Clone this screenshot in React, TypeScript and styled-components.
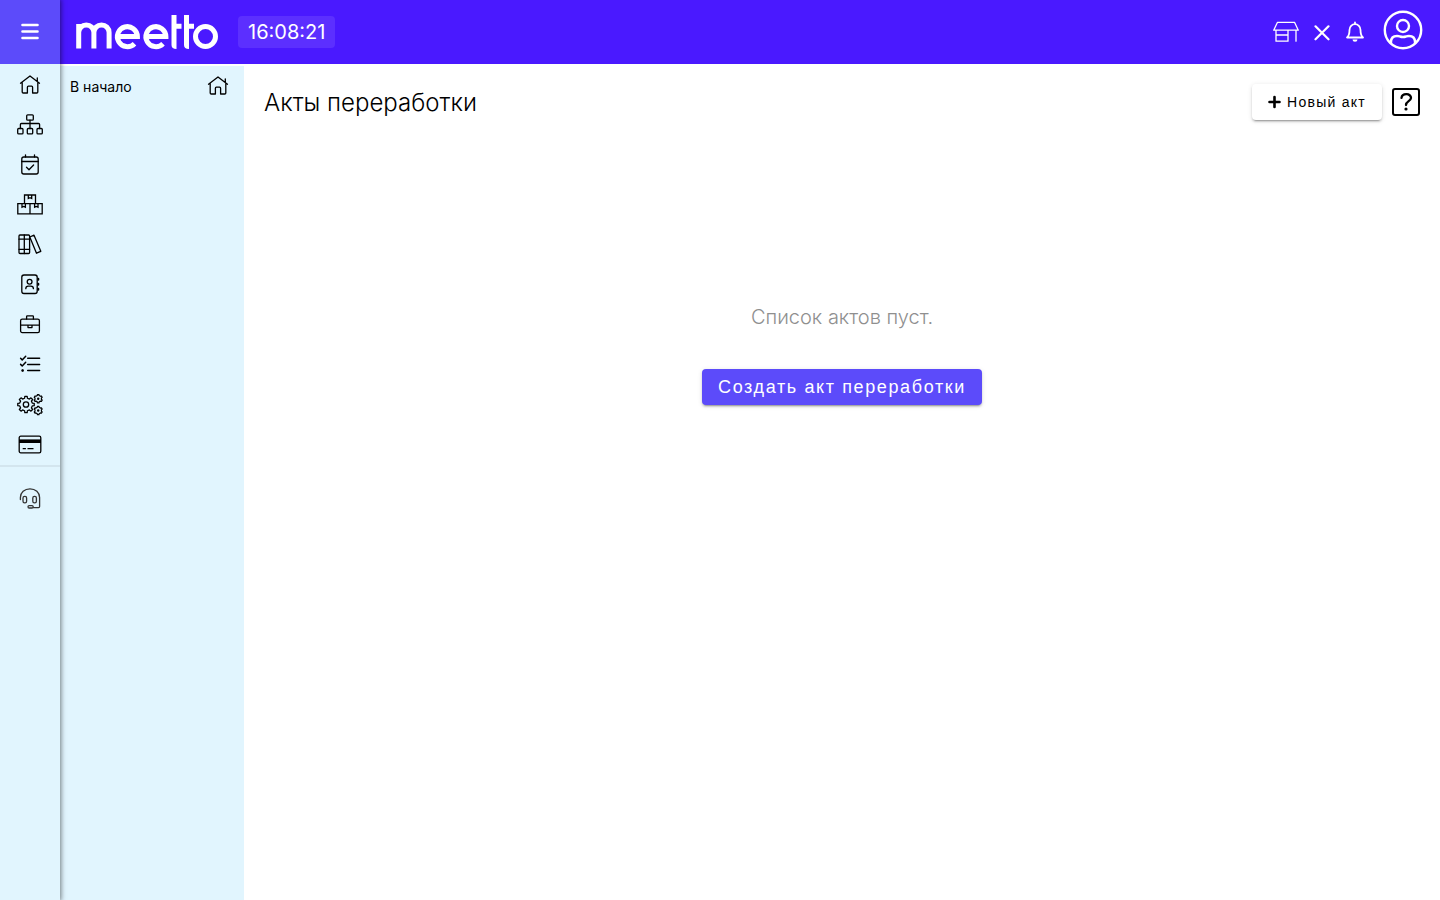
import React, { useState } from "react";
import styled, { createGlobalStyle } from "styled-components";

const GlobalStyle = createGlobalStyle`
  *, *::before, *::after { box-sizing: border-box; }
  body {
    margin: 0;
    background: #fff;
    color: #000;
    font-family: Inter, "Liberation Sans", sans-serif;
  }
  button { cursor: pointer; }
`;

const Page = styled.div`
  display: flex;
  min-height: 100vh;
`;

const Rail = styled.aside`
  position: relative;
  z-index: 2;
  flex: none;
  width: 60px;
  background: #e1f5fe;
  box-shadow: 0 0 5px 1px rgba(0, 0, 0, 0.5);
`;

const MenuButton = styled.button`
  display: flex;
  align-items: center;
  justify-content: center;
  width: 100%;
  height: 64px;
  padding: 0;
  border: 0;
  background: #5c4bfa;
  color: #fff;
`;

const RailNav = styled.nav<{ $separated?: boolean }>`
  display: flex;
  flex-direction: column;
  padding: ${(p) => (p.$separated ? "11px 0" : "0 0 1px")};
  border-top: ${(p) => (p.$separated ? "2px solid #d3e5ee" : "0")};
  color: ${(p) => (p.$separated ? "#333" : "#000")};
`;

const RailLink = styled.a`
  display: flex;
  align-items: center;
  justify-content: center;
  height: 40px;
  color: inherit;
`;

const Shell = styled.div`
  display: flex;
  flex: 1;
  flex-direction: column;
  min-width: 0;
`;

const TopBar = styled.header`
  display: flex;
  align-items: center;
  height: 64px;
  padding: 0 9px 0 16px;
  background: #4a19ff;
  color: #fff;
`;

const LogoLink = styled.a`
  display: flex;
  color: inherit;
`;

const Clock = styled.time`
  margin-left: 20px;
  padding: 0 10px;
  border-radius: 4px;
  background: #5c2fff;
  font-size: 20px;
  line-height: 32px;
`;

const Tools = styled.div`
  display: flex;
  align-items: center;
  gap: 4px;
  margin-left: auto;
`;

const ToolButton = styled.button<{ $size: number }>`
  display: flex;
  align-items: center;
  justify-content: center;
  width: ${(p) => p.$size}px;
  height: 40px;
  padding: 0;
  border: 0;
  background: none;
  color: inherit;
`;

const Body = styled.div`
  display: flex;
  flex: 1;
  padding-top: 2px;
`;

const SidePanel = styled.nav`
  flex: none;
  width: 184px;
  background: #e1f5fe;
`;

const PanelLink = styled.a`
  display: flex;
  align-items: flex-start;
  justify-content: space-between;
  padding: 0 12px 0 10px;
  color: #000;
  font-size: 14px;
  line-height: 42px;
  text-decoration: none;

  svg { margin-top: 5px; }
`;

const Main = styled.main`
  flex: 1;
  min-width: 0;
  padding: 18px 20px;
`;

const Heading = styled.div`
  display: flex;
  align-items: center;
  gap: 10px;
`;

const Title = styled.h1`
  flex: 1;
  margin: 0;
  padding-top: 2px;
  font-size: 24px;
  font-weight: 300;
  line-height: 34px;
`;

const Button = styled.button<{ $primary?: boolean }>`
  display: inline-flex;
  align-items: center;
  gap: 6px;
  height: 36px;
  padding: 0 16px;
  border: 0;
  border-radius: 4px;
  background: ${(p) => (p.$primary ? "#5c4bfa" : "#fff")};
  color: ${(p) => (p.$primary ? "#fff" : "#000")};
  font-family: "Liberation Sans", Arial, sans-serif;
  font-size: ${(p) => (p.$primary ? 18 : 14)}px;
  letter-spacing: 0.09em;
  box-shadow: 0 3px 1px -2px rgba(0, 0, 0, 0.2), 0 2px 2px 0 rgba(0, 0, 0, 0.14),
    0 1px 5px 0 rgba(0, 0, 0, 0.12);
`;

const HelpButton = styled.button`
  display: flex;
  padding: 0;
  border: 0;
  background: none;
  color: #000;
`;

const Empty = styled.section`
  display: flex;
  flex-direction: column;
  align-items: center;
  gap: 35px;
  padding-top: 180px;
`;

const EmptyText = styled.p`
  margin: 0;
  color: #8f8f8f;
  font-size: 20px;
  font-weight: 300;
  line-height: 34px;
`;

const Line = styled.svg`
  display: block;
  fill: none;
  stroke: currentColor;
  stroke-width: 1.3;
  stroke-linecap: round;
  stroke-linejoin: round;
`;

const RailIcon = ({ children }: { children: React.ReactNode }) => (
  <Line width="28" height="28" viewBox="0 0 28 28" aria-hidden="true">
    {children}
  </Line>
);

const HomeIcon = () => (
  <RailIcon>
    <path d="M4.5 13.2 14 5.900l9.500 7.300M6.200 12.200V21.900q0 1.100 1.100 1.100H11.400V17.200q0-1 1-1h3.200q1 0 1 1V23H20.700q1.100 0 1.100-1.100V12.200M21.300 8V11.200" />
  </RailIcon>
);

const SitemapIcon = () => (
  <RailIcon>
    <rect x="10.700" y="4.800" width="6.600" height="5.400" rx="1" />
    <rect x="1.700" y="18.500" width="5.300" height="5.400" rx="1" />
    <rect x="11.300" y="18.500" width="5.400" height="5.400" rx="1" />
    <rect x="21" y="18.500" width="5.300" height="5.400" rx="1" />
    <path d="M14 10.200V18.500M4.400 18.500V14.500q0-1 1-1H22.600q1 0 1 1V18.500" />
  </RailIcon>
);

const CalendarIcon = () => (
  <RailIcon>
    <rect x="5.800" y="7" width="16.400" height="17" rx="2" />
    <path d="M5.800 11.500H22.200M9.500 4.800V7M18.500 4.800V7M10.500 17.300l2.500 2.500 4.600-4.800" />
  </RailIcon>
);

const BoxesIcon = () => (
  <RailIcon>
    <path
      strokeLinejoin="miter"
      d="M8.500 13.700V5H19.500V13.700M1.800 13.700H26.200V23.900H1.800ZM14 13.700V23.900M12.300 5V8.500l1.700-.8 1.700.8V5M6 13.700V17.200l1.700-.8 1.700.8V13.700M18.600 13.700V17.200l1.700-.8 1.700.8V13.700"
    />
  </RailIcon>
);

const BooksIcon = () => (
  <RailIcon>
    <rect x="3" y="5" width="10.600" height="18.500" rx="1" />
    <path d="M8.300 5V23.500M3 9.200H13.600M3 19.300H13.600M13.800 7 18 5.200 24.800 21.300 20.500 23.200Z" />
  </RailIcon>
);

const ContactIcon = () => (
  <RailIcon>
    <rect x="5.800" y="5" width="15.400" height="18.500" rx="2.200" />
    <circle cx="13.600" cy="11.800" r="2.400" />
    <path d="M9.800 18.700q0-2.500 2.500-2.500h2.600q2.500 0 2.500 2.500" />
    <path strokeWidth="2" d="M22.300 8.800V9.800M22.300 13.800V14.800M22.300 18.800V19.800" />
  </RailIcon>
);

const BriefcaseIcon = () => (
  <RailIcon>
    <rect x="4.600" y="9.200" width="18.800" height="13.400" rx="1.600" />
    <path d="M10.600 9V6.600q0-.8.8-.8h5.200q.8 0 .8.800V9M4.600 15.200H23.400M12 15.200V17.600H16V15.200" />
  </RailIcon>
);

const TasksIcon = () => (
  <RailIcon>
    <path
      strokeWidth="1.500"
      d="M11.700 8.300H23.600M11.700 14.500H23.600M11.700 20.600H23.600M4.600 8.300l1.600 1.600 3.500-3.700M4.600 14.400l1.600 1.600 3.500-3.700"
    />
    <circle cx="6.600" cy="20.600" r="1" fill="currentColor" stroke="none" />
    <circle cx="6.600" cy="20.600" r=".6" />
  </RailIcon>
);

const gearPath = (cx: number, cy: number, teeth: number, outer: number, inner: number) => {
  const step = (Math.PI * 2) / teeth;
  const point = (r: number, a: number) =>
    `${(cx + r * Math.sin(a)).toFixed(2)} ${(cy - r * Math.cos(a)).toFixed(2)}`;
  const points: string[] = [];
  for (let i = 0; i < teeth; i++) {
    const a = i * step;
    points.push(
      point(outer, a - step * 0.18),
      point(outer, a + step * 0.18),
      point(inner, a + step * 0.28),
      point(inner, a + step * 0.72)
    );
  }
  return `M${points.join("L")}Z`;
};

const GearsIcon = () => (
  <RailIcon>
    <path d={gearPath(10, 14.5, 8, 8.3, 6.4)} />
    <circle cx="10" cy="14.500" r="2.700" />
    <g strokeWidth="1.200">
      <path d={gearPath(22.2, 8.7, 6, 4.2, 3.3)} />
      <path d={gearPath(22.2, 20.5, 6, 4.2, 3.3)} />
    </g>
    <circle cx="22.200" cy="8.700" r="1.200" fill="currentColor" stroke="none" />
    <circle cx="22.200" cy="20.500" r="1.200" fill="currentColor" stroke="none" />
  </RailIcon>
);

const CardIcon = () => (
  <RailIcon>
    <rect x="3.200" y="6.200" width="21.600" height="16.600" rx="1.600" />
    <path fill="currentColor" stroke="none" d="M3 9.400H25V13H3Z" />
    <path d="M7.200 18.700H9.400M12 18.700H17" />
  </RailIcon>
);

const HeadsetIcon = () => (
  <RailIcon>
    <path d="M4.400 15.500V13.500C4.400 8.500 8.500 4.800 14 4.800s9.600 3.700 9.600 8.700V22.600q0 1-1 1H17.500" />
    <rect x="7" y="12.400" width="3.600" height="6.400" rx="1.600" />
    <rect x="16.800" y="12.400" width="3.600" height="6.400" rx="1.600" />
    <rect x="12" y="21.600" width="5.200" height="2.400" rx="1.200" />
  </RailIcon>
);

const MenuIcon = () => (
  <svg width="18" height="18" viewBox="0 0 18 18" fill="none" stroke="currentColor" strokeWidth="2.600" strokeLinecap="round" aria-hidden="true">
    <path d="M1.500 2H16.500M1.500 8.500H16.500M1.500 15H16.500" />
  </svg>
);

const Logo = () => (
  <svg width="142" height="36" viewBox="0 0 142 36" fill="none" stroke="currentColor" strokeWidth="5" role="img" aria-label="meetto">
    <path d="M2.700 34.500V10M2.700 34.500V18.500a7.600 7.600 0 0 1 15.200 0V34.500M17.900 34.500V18.500a7.600 7.600 0 0 1 15.200 0V34.500" />
    <path d="M41.500 22.500H61.400A10 10 0 1 0 58.500 29.700" />
    <path d="M70 22.500H89.900A10 10 0 1 0 87 29.700" />
    <path d="M98 1V31Q98 32.500 100.500 32.500M110.500 1V31Q110.500 32.500 113 32.500" />
    <path d="M98 12.300H105.500M110.500 12.300H118" />
    <circle cx="129.500" cy="22.500" r="10" />
  </svg>
);

const StoreIcon = () => (
  <Line width="28" height="28" viewBox="0 0 28 28" aria-hidden="true">
    <path d="M5.500 4.300H22.500L26.300 12.200H1.700ZM4 12.200V23.200H16V12.200M4 17H16M24 12.200V23.200" />
  </Line>
);

const CloseIcon = () => (
  <Line width="16" height="18" viewBox="0 0 16 18" aria-hidden="true">
    <path strokeWidth="2.200" d="M1.500 3.300 14.500 16.300M14.500 3.300 1.500 16.300" />
  </Line>
);

const BellIcon = () => (
  <Line width="20" height="22" viewBox="0 0 20 22" aria-hidden="true">
    <path strokeWidth="1.800" d="M10 1.500V3M2 16.500H18Q15.500 14.500 15.500 9a5.500 5.800 0 0 0-11 0Q4.500 14.500 2 16.500Z" />
    <path fill="currentColor" stroke="none" d="M7.500 18.500h5a2.500 2.300 0 0 1-5 0Z" />
  </Line>
);

const UserIcon = () => (
  <Line width="40" height="44" viewBox="0 0 40 44" aria-hidden="true">
    <g strokeWidth="2.400">
      <circle cx="20" cy="20" r="18.200" />
      <circle cx="20" cy="16" r="6" />
      <path d="M8 33V32q0-6 6-6 2 0 3 .5 3 1 6 0 1-.5 3-.5 6 0 6 6V33" />
    </g>
  </Line>
);

const PlusIcon = () => (
  <Line width="13" height="14" viewBox="0 0 13 14" aria-hidden="true">
    <path strokeWidth="2.600" d="M6.500 2V12M1.500 7H11.500" />
  </Line>
);

const HelpIcon = () => (
  <Line width="28" height="28" viewBox="0 0 28 28" aria-hidden="true">
    <rect x="1" y="1" width="26" height="26" rx="2" strokeWidth="2" />
    <path strokeWidth="2.300" d="M9.500 9.800C10.200 4.800 19.200 5.200 19 10c-.2 3.200-5 3.200-5 7" />
    <circle cx="14" cy="21" r="1.600" fill="currentColor" stroke="none" />
  </Line>
);

const sections = [
  { label: "В начало", Icon: HomeIcon },
  { label: "Структура", Icon: SitemapIcon },
  { label: "Календарь", Icon: CalendarIcon },
  { label: "Склад", Icon: BoxesIcon },
  { label: "Справочники", Icon: BooksIcon },
  { label: "Контакты", Icon: ContactIcon },
  { label: "Портфель", Icon: BriefcaseIcon },
  { label: "Задачи", Icon: TasksIcon },
  { label: "Настройки", Icon: GearsIcon },
  { label: "Оплата", Icon: CardIcon },
];

export default function App() {
  const [panelOpen, setPanelOpen] = useState(true);

  return (
    <>
      <GlobalStyle />
      <Page>
        <Rail>
          <MenuButton aria-label="Меню" aria-expanded={panelOpen} onClick={() => setPanelOpen(!panelOpen)}>
            <MenuIcon />
          </MenuButton>
          <RailNav aria-label="Разделы">
            {sections.map(({ label, Icon }) => (
              <RailLink key={label} href="#" aria-label={label}>
                <Icon />
              </RailLink>
            ))}
          </RailNav>
          <RailNav $separated aria-label="Помощь">
            <RailLink href="#" aria-label="Поддержка">
              <HeadsetIcon />
            </RailLink>
          </RailNav>
        </Rail>
        <Shell>
          <TopBar>
            <LogoLink href="#">
              <Logo />
            </LogoLink>
            <Clock>16:08:21</Clock>
            <Tools>
              <ToolButton $size={38} aria-label="Магазин">
                <StoreIcon />
              </ToolButton>
              <ToolButton $size={26} aria-label="Закрыть">
                <CloseIcon />
              </ToolButton>
              <ToolButton $size={32} aria-label="Уведомления">
                <BellIcon />
              </ToolButton>
              <ToolButton $size={56} aria-label="Профиль">
                <UserIcon />
              </ToolButton>
            </Tools>
          </TopBar>
          <Body>
            {panelOpen && (
              <SidePanel aria-label="Подменю">
                <PanelLink href="#">
                  В начало
                  <HomeIcon />
                </PanelLink>
              </SidePanel>
            )}
            <Main>
              <Heading>
                <Title>Акты переработки</Title>
                <Button>
                  <PlusIcon />
                  Новый акт
                </Button>
                <HelpButton aria-label="Справка">
                  <HelpIcon />
                </HelpButton>
              </Heading>
              <Empty>
                <EmptyText>Список актов пуст.</EmptyText>
                <Button $primary>Создать акт переработки</Button>
              </Empty>
            </Main>
          </Body>
        </Shell>
      </Page>
    </>
  );
}
